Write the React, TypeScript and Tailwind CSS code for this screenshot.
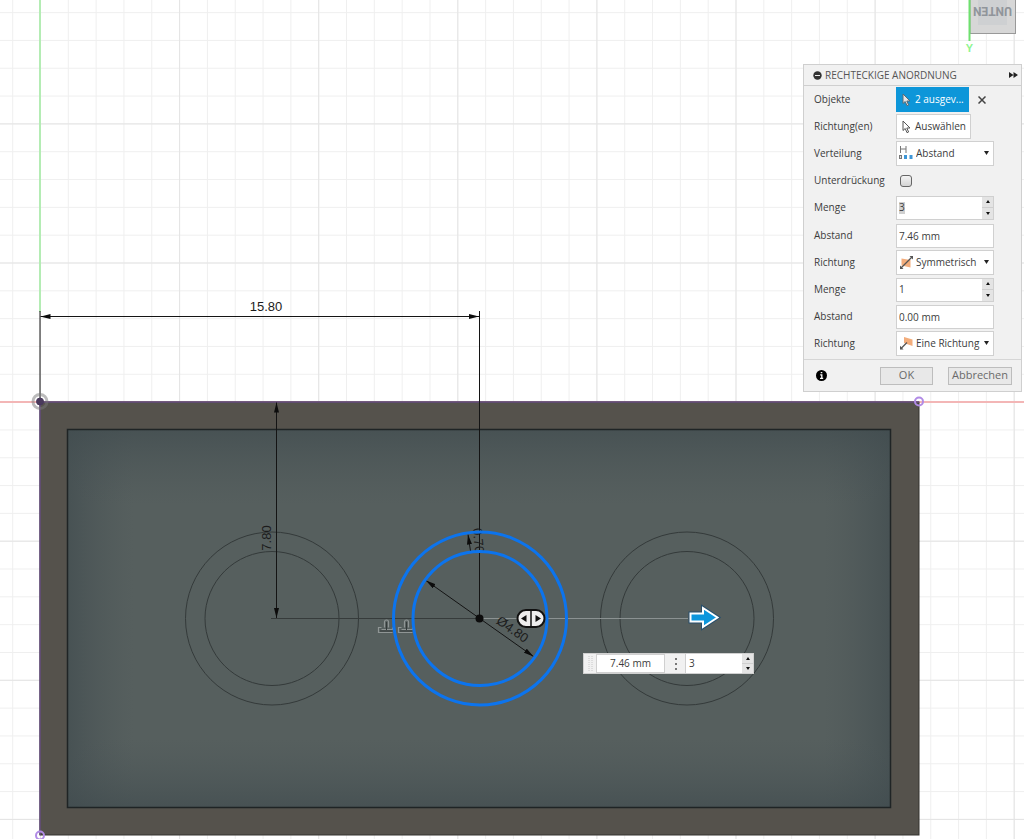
import { useState } from "react";
import type { ReactNode } from "react";

const UNIT = 27.82;
const ORIGIN = { x: 40, y: 401.6 };

interface RowProps {
  label: string;
  htmlFor: string;
  children: ReactNode;
}

function Row({ label, htmlFor, children }: RowProps) {
  return (
    <div className="flex h-[27px] items-center">
      <label htmlFor={htmlFor} className="w-[82px] shrink-0 whitespace-nowrap">
        {label}
      </label>
      {children}
    </div>
  );
}

function CursorIcon({ light = false }: { light?: boolean }) {
  return (
    <svg viewBox="0 0 9 14" className="h-[14px] w-[9px] shrink-0">
      <path
        d="M1 1v9.5l2.2-2 1.8 4.2 1.6-.7-1.8-4H8z"
        fill={light ? "#e8e8e8" : "#ffffff"}
        stroke={light ? "#5d6a72" : "#555555"}
        strokeWidth="1"
      />
    </svg>
  );
}

function SpacingIcon() {
  return (
    <svg viewBox="0 0 14 14" className="h-[14px] w-[14px]">
      <path d="M1.5 0v7M7 0v7M1.5 3H7" stroke="#777" fill="none" />
      <rect x="0.5" y="9.5" width="2" height="3" fill="#ddd" stroke="#777" />
      <rect x="5" y="9" width="3" height="4" fill="#3f96d6" />
      <rect x="10.5" y="9" width="3" height="4" fill="#3f96d6" />
    </svg>
  );
}

function SymmetricIcon() {
  return (
    <svg viewBox="0 0 15 15" className="h-[15px] w-[15px]">
      <path d="M2.500 3.500l9 1.500v7.500l-9-2z" fill="#f3ad7c" />
      <path d="M1.500 13.500l12-12" stroke="#555" strokeWidth="1.300" />
      <path d="M10.500 1h3.500v3.500zM1 10.500V14h3.500z" fill="#555" />
    </svg>
  );
}

function OneDirectionIcon() {
  return (
    <svg viewBox="0 0 15 15" className="h-[15px] w-[15px]">
      <path d="M5 1l8.500 2.500v6.500L5 7z" fill="#f3ad7c" />
      <path d="M1.500 13l6.500-6.500" stroke="#555" strokeWidth="1.300" />
      <path d="M1 9.800v3.700h3.500z" fill="#555" />
    </svg>
  );
}

interface SelectFieldProps {
  id: string;
  icon: ReactNode;
  options: string[];
}

function SelectField({ id, icon, options }: SelectFieldProps) {
  return (
    <div className="relative h-[25px] w-[98px] border border-[#d0d0d0] bg-white">
      <span className="pointer-events-none absolute left-[2px] top-1">{icon}</span>
      <select id={id} className="h-full w-full appearance-none bg-transparent pl-[19px] outline-none">
        {options.map((option) => (
          <option key={option}>{option}</option>
        ))}
      </select>
      <svg viewBox="0 0 5 4" className="pointer-events-none absolute right-1 top-[9px] h-1 w-[5px]">
        <path d="M0 0h5L2.500 4z" fill="#222" />
      </svg>
    </div>
  );
}

interface StepperProps {
  name: string;
  onStep: (delta: number) => void;
}

function Stepper({ name, onStep }: StepperProps) {
  return (
    <div className="flex w-[11px] shrink-0 flex-col bg-[#e4e4e4]">
      <button
        aria-label={`${name} erhöhen`}
        onClick={() => onStep(1)}
        className="flex flex-1 items-center justify-center border-b border-[#cfcfcf]"
      >
        <svg viewBox="0 0 4 3" className="h-[3px] w-1">
          <path d="M0 3h4L2 0z" fill="#111" />
        </svg>
      </button>
      <button
        aria-label={`${name} verringern`}
        onClick={() => onStep(-1)}
        className="flex flex-1 items-center justify-center"
      >
        <svg viewBox="0 0 4 3" className="h-[3px] w-1">
          <path d="M0 0h4L2 3z" fill="#111" />
        </svg>
      </button>
    </div>
  );
}

interface CountFieldProps {
  id: string;
  value: number;
  highlight?: boolean;
  onChange: (value: number) => void;
}

function CountField({ id, value, highlight, onChange }: CountFieldProps) {
  return (
    <div className="flex h-6 w-[98px] border border-[#d0d0d0] bg-white">
      <div className="flex min-w-0 flex-1 items-center pl-[2px]">
        <input
          id={id}
          value={value}
          onChange={(e) => onChange(Number(e.target.value) || 0)}
          className={highlight ? "h-3 w-[6px] bg-[#d0d0d0] outline-none" : "w-full outline-none"}
        />
      </div>
      <Stepper name="Menge" onStep={(delta) => onChange(Math.max(1, value + delta))} />
    </div>
  );
}

function TextField({ id, value, onChange }: { id: string; value: string; onChange: (value: string) => void }) {
  return (
    <input
      id={id}
      value={value}
      onChange={(e) => onChange(e.target.value)}
      className="h-6 w-[98px] border border-[#d0d0d0] bg-white pl-[2px] outline-none"
    />
  );
}

function Constraint({ x }: { x: number }) {
  return (
    <g transform={`translate(${x} 619)`} fill="none">
      <path d="M5.500 8.500V3a2 2 0 0 1 4 0v5.500M2.500 8.500h-3v5h14M2.500 10.500h11v-2" stroke="#8f9595" strokeWidth="1.200" />
      <path d="M7.500 3v8M1 12h12.500" stroke="#343a3a" strokeWidth="1" />
    </g>
  );
}

function SketchCanvas() {
  const holes = [272, 687];
  return (
    <svg className="absolute inset-0 h-full w-full" fontFamily="Liberation Sans, Arial, sans-serif">
      <defs>
        <pattern id="minor" x={ORIGIN.x} y={ORIGIN.y} width={UNIT} height={UNIT} patternUnits="userSpaceOnUse">
          <path d={`M0 0H${UNIT}M0 0V${UNIT}`} stroke="#efefef" strokeWidth="2" fill="none" />
        </pattern>
        <pattern id="major" x={ORIGIN.x} y={ORIGIN.y} width={UNIT * 5} height={UNIT * 5} patternUnits="userSpaceOnUse">
          <path d={`M0 0H${UNIT * 5}M0 0V${UNIT * 5}`} stroke="#e4e4e4" strokeWidth="2" fill="none" />
        </pattern>
        <linearGradient id="shadeY" x1="0" y1="0" x2="0" y2="1">
          <stop offset="0" stopColor="#414c4f" stopOpacity="0.7" />
          <stop offset="0.2" stopColor="#4b5557" stopOpacity="0" />
          <stop offset="0.82" stopColor="#4b5557" stopOpacity="0" />
          <stop offset="1" stopColor="#414c4f" stopOpacity="0.7" />
        </linearGradient>
        <linearGradient id="shadeX" x1="0" y1="0" x2="1" y2="0">
          <stop offset="0" stopColor="#414c4f" stopOpacity="0.7" />
          <stop offset="0.08" stopColor="#4b5557" stopOpacity="0" />
          <stop offset="0.92" stopColor="#4b5557" stopOpacity="0" />
          <stop offset="1" stopColor="#414c4f" stopOpacity="0.7" />
        </linearGradient>
        <marker id="arrow" viewBox="0 0 10 5" refX="10" refY="2.5" markerWidth="10" markerHeight="5" markerUnits="userSpaceOnUse" orient="auto-start-reverse">
          <path d="M0 0l10 2.500L0 5z" fill="#0c0c0c" />
        </marker>
      </defs>

      <rect width="100%" height="100%" fill="#ffffff" />
      <rect width="100%" height="100%" fill="url(#minor)" />
      <rect width="100%" height="100%" fill="url(#major)" />
      <path d="M40 0V312" stroke="#b4ecb4" strokeWidth="2" />
      <line x1="0" x2="100%" y1="402" y2="402" stroke="#f3b6b6" strokeWidth="2" />

      {/* body */}
      <rect x="40" y="402" width="879" height="433" fill="#55524c" stroke="#35332f" />
      <rect x="67.5" y="429.5" width="823" height="378" fill="#565f5e" />
      <rect x="67.5" y="429.5" width="823" height="378" fill="url(#shadeX)" />
      <rect x="67.5" y="429.5" width="823" height="378" fill="url(#shadeY)" />
      <rect x="67.5" y="429.5" width="823" height="378" fill="none" stroke="#1f2425" strokeWidth="1.5" />
      <path d="M40 835V402H919" stroke="#6a5282" fill="none" strokeWidth="1.5" />

      {holes.map((cx) => (
        <g key={cx} fill="none" stroke="#343a3a">
          <circle cx={cx} cy="618.5" r="86.5" />
          <circle cx={cx} cy="618.5" r="67" />
        </g>
      ))}
      <path d="M271 618.500H480" stroke="#363b3b" />
      <path d="M480 618.500H688" stroke="#8b9292" />

      <Constraint x={379} />
      <Constraint x={399} />

      {/* dimensions */}
      <g stroke="#141414" fill="none">
        <path d="M40 311V401M479.500 311V618" />
        <path d="M40.500 316.500H479" markerStart="url(#arrow)" markerEnd="url(#arrow)" />
        <path d="M276.500 402.500V618" markerStart="url(#arrow)" markerEnd="url(#arrow)" />
        <path d="M426 580.500L533.500 656.500" markerStart="url(#arrow)" markerEnd="url(#arrow)" />
        <path d="M470.500 551L468 534.500" markerEnd="url(#arrow)" />
      </g>
      <g fill="#1c1c1c" fontSize="13" textAnchor="middle">
        <text x="266" y="311">15.80</text>
        <text transform="translate(271 538) rotate(-90)">7.80</text>
        <text transform="translate(474 541) rotate(84)">0.70</text>
        <text transform="translate(510 633) rotate(35)">Ø4.80</text>
      </g>

      <g fill="none" stroke="#0c74ee" strokeWidth="3">
        <circle cx="480" cy="618.5" r="86.5" />
        <circle cx="480" cy="618.5" r="67" />
      </g>
      <circle cx="479.5" cy="618.5" r="4" fill="#0c0c0c" />

      {/* origin and corner points */}
      <circle cx="40" cy="401.5" r="7" fill="none" stroke="#777777" strokeOpacity="0.5" strokeWidth="3" />
      <circle cx="40" cy="401.5" r="3.5" fill="#4a3a5c" stroke="#47395a" />
      <circle cx="919" cy="401.5" r="4" fill="none" stroke="#b18be6" strokeWidth="2" />
      <circle cx="40" cy="835.5" r="4" fill="none" stroke="#b18be6" strokeWidth="2" />

      {/* drag handles */}
      <rect x="517.5" y="610" width="27" height="17" rx="8.5" fill="#eeeeee" stroke="#111111" strokeWidth="2" />
      <path d="M531 610v17" stroke="#111111" strokeWidth="1.5" />
      <path d="M526.500 615v7l-5.500-3.500zM535.500 615v7l5.500-3.500z" fill="#111111" />
      <path
        d="M690.500 613.500h12.500v-5.500l14.500 9.500-14.500 9.500v-5.500h-12.500z"
        fill="#0d96dc"
        stroke="#274f6c"
        strokeWidth="4"
      />
      <path
        d="M690.500 613.500h12.500v-5.500l14.500 9.500-14.500 9.500v-5.500h-12.500z"
        fill="#0d96dc"
        stroke="#ffffff"
        strokeWidth="2"
      />
    </svg>
  );
}

function ViewCube() {
  return (
    <svg viewBox="0 0 54 56" className="absolute right-[6px] top-0 h-14 w-[54px]" fontFamily="Liberation Sans, Arial, sans-serif">
      <rect x="6" y="-2" width="45.5" height="35.5" fill="#d7d7d7" stroke="#999999" />
      <rect x="14" y="0" width="29" height="25" fill="#ced0d2" />
      <text transform="translate(28.500 7) rotate(180)" textAnchor="middle" fontSize="12" fontFamily="Roboto, sans-serif" fontWeight="bold" fill="#90959b">
        UNTEN
      </text>
      <path d="M5.500 0V41" stroke="#6fe06f" strokeWidth="2" />
      <text x="5.5" y="52" textAnchor="middle" fontSize="11" fontWeight="bold" fill="#8ff58f">
        Y
      </text>
    </svg>
  );
}

export default function App() {
  const [count, setCount] = useState(3);
  const [secondCount, setSecondCount] = useState(1);
  const [distance, setDistance] = useState("7.46 mm");
  const [secondDistance, setSecondDistance] = useState("0.00 mm");

  return (
    <main className="relative h-screen overflow-hidden bg-white font-['Open_Sans','Noto_Sans',sans-serif] text-[10px] font-medium text-[#3c3c3c]">
      <SketchCanvas />
      <ViewCube />

      <section className="absolute right-[2px] top-16 w-[219px] border border-[#cfcfcf] bg-[#f1f1f1]">
        <header className="flex h-[21px] items-center border-b border-[#cfcfcf] pl-[9px] pr-[3px]">
          <button aria-label="Einklappen" className="mr-[3px]">
            <svg viewBox="0 0 9 9" className="h-[9px] w-[9px]">
              <circle cx="4.5" cy="4.5" r="4.2" fill="#333" />
              <path d="M2 4.500h5" stroke="#eee" />
            </svg>
          </button>
          <h2 className="flex-1 whitespace-nowrap font-normal text-[#555]">RECHTECKIGE ANORDNUNG</h2>
          <button aria-label="Andocken">
            <svg viewBox="0 0 9 6" className="h-[6px] w-[9px]">
              <path d="M0 0l4.500 3L0 6zM4.500 0L9 3 4.500 6z" fill="#222" />
            </svg>
          </button>
        </header>

        <div className="pb-[2px] pl-[10px]">
          <Row label="Objekte" htmlFor="objects">
            <button id="objects" className="flex h-[25px] w-[73px] items-center gap-1 bg-[#0d96d9] pl-[6px] text-white">
              <CursorIcon light />
              2 ausgev...
            </button>
            <button aria-label="Auswahl aufheben" className="ml-[9px]">
              <svg viewBox="0 0 8 8" className="h-2 w-2">
                <path d="M0.500 0.500l7 7M7.500 0.500l-7 7" stroke="#444" strokeWidth="1.5" />
              </svg>
            </button>
          </Row>
          <Row label="Richtung(en)" htmlFor="directions">
            <button id="directions" className="flex h-[25px] w-[75px] items-center gap-1 border border-[#d0d0d0] bg-white pl-[5px]">
              <CursorIcon />
              Auswählen
            </button>
          </Row>
          <Row label="Verteilung" htmlFor="distribution">
            <SelectField id="distribution" icon={<SpacingIcon />} options={["Abstand", "Ausdehnung"]} />
          </Row>
          <Row label="Unterdrückung" htmlFor="suppress">
            <input
              id="suppress"
              type="checkbox"
              className="ml-1 h-3 w-3 appearance-none rounded-[3px] border border-[#666] bg-linear-to-b from-[#f4f4f4] to-[#d4d4d4] checked:bg-[#0d96d9]"
            />
          </Row>
          <Row label="Menge" htmlFor="count">
            <CountField id="count" value={count} highlight onChange={setCount} />
          </Row>
          <div className="pt-px">
            <Row label="Abstand" htmlFor="distance">
              <TextField id="distance" value={distance} onChange={setDistance} />
            </Row>
            <Row label="Richtung" htmlFor="direction">
              <SelectField id="direction" icon={<SymmetricIcon />} options={["Symmetrisch", "Eine Richtung"]} />
            </Row>
            <Row label="Menge" htmlFor="count-2">
              <CountField id="count-2" value={secondCount} onChange={setSecondCount} />
            </Row>
            <Row label="Abstand" htmlFor="distance-2">
              <TextField id="distance-2" value={secondDistance} onChange={setSecondDistance} />
            </Row>
            <Row label="Richtung" htmlFor="direction-2">
              <SelectField id="direction-2" icon={<OneDirectionIcon />} options={["Eine Richtung", "Symmetrisch"]} />
            </Row>
          </div>
        </div>

        <footer className="flex h-8 items-center border-t border-[#d6d6d6] pl-3 pr-[9px] text-[11px] font-normal text-[#6a6a6a]">
          <button aria-label="Info" className="mr-auto">
            <svg viewBox="0 0 11 11" className="h-[11px] w-[11px]">
              <circle cx="5.5" cy="5.5" r="5.5" fill="#000" />
              <path d="M4.200 4.800h1.600v3.400M4 8.400h3.200M4.700 2.600h1.600" stroke="#fff" strokeWidth="1.300" fill="none" />
            </svg>
          </button>
          <button className="mr-[15px] flex h-[18px] w-[53px] items-center justify-center border border-[#bdbdbd] bg-[#e8e8e8]">
            OK
          </button>
          <button className="flex h-[18px] w-16 items-center justify-center border border-[#bdbdbd] bg-[#e8e8e8]">
            Abbrechen
          </button>
        </footer>
      </section>

      {/* in-canvas value editor */}
      <div className="absolute left-[583px] top-[653px] flex h-[21px] w-[171px] border border-[#d0d0d0] bg-[#f1f1f1]">
        <svg className="h-full w-3" aria-hidden="true">
          <path d="M5 2v16M8 2v16" stroke="#c8c8c8" strokeDasharray="1 1" />
        </svg>
        <input
          aria-label="Abstand"
          value={distance}
          onChange={(e) => setDistance(e.target.value)}
          className="w-[69px] border border-[#d0d0d0] bg-white text-center outline-none"
        />
        <svg viewBox="0 0 20 19" className="h-full w-5 shrink-0">
          <path d="M10 4h2v2h-2zM10 9h2v2h-2zM10 14h2v2h-2z" fill="#777" />
        </svg>
        <input
          aria-label="Menge"
          value={count}
          onChange={(e) => setCount(Number(e.target.value) || 0)}
          className="min-w-0 flex-1 border-l border-[#d0d0d0] bg-white pl-[3px] outline-none"
        />
        <Stepper name="Menge" onStep={(delta) => setCount(Math.max(1, count + delta))} />
      </div>
    </main>
  );
}
